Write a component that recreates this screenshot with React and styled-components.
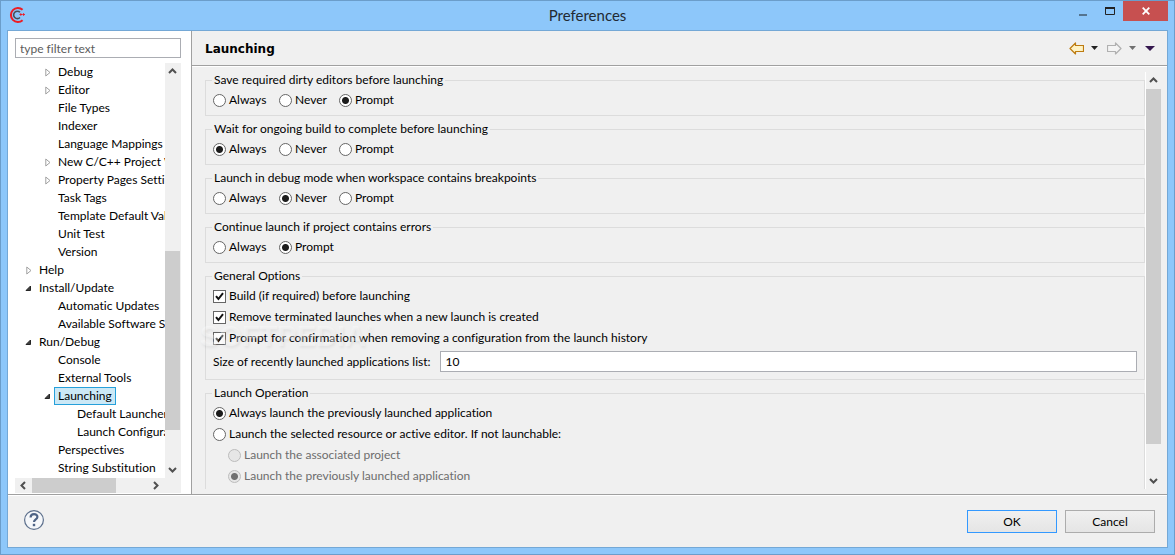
import React from 'react';
import styled, { createGlobalStyle, css } from 'styled-components';

const Global = createGlobalStyle`
  * { box-sizing: border-box; }
  html, body, #root { height: 100%; }
  body {
    margin: 0;
    color: #000;
    font: 12px/16px Lato, "Open Sans", sans-serif;
    font-variant-ligatures: none;
  }
  button, input { font: inherit; color: inherit; }
`;

/* ---------- window frame ---------- */

const Window = styled.div`
  display: flex;
  flex-direction: column;
  height: 100%;
  padding: 0 6px 6px;
  background: #8dc7fa;
  border: 1px solid #6b9dca;
`;

const TitleBar = styled.header`
  display: grid;
  grid-template-columns: 1fr auto 1fr;
  flex: none;
  height: 29px;
`;

const AppMark = styled.div`
  padding: 5px 0 0 2px;
  svg { display: block; }
`;

const WindowTitle = styled.h1`
  margin: 0;
  font-size: 15px;
  font-weight: 400;
  line-height: 29px;
  color: #222a33;
`;

const Controls = styled.div`
  display: flex;
  justify-content: flex-end;
  align-items: flex-start;
`;

const ControlButton = styled.button`
  display: grid;
  place-items: center;
  width: ${p => (p.$close ? 45 : 27)}px;
  height: 20px;
  padding: 0;
  border: 0;
  color: #fff;
  background: ${p => (p.$close ? '#c75050' : 'transparent')};
`;

const Dialog = styled.main`
  display: flex;
  flex-direction: column;
  flex: 1;
  min-height: 0;
  background: #f0f0f0;
  border: 1px solid #74a8d6;
`;

const Panes = styled.div`
  display: flex;
  flex: 1;
  min-height: 0;
  border-bottom: 1px solid #a0a0a0;
`;

/* ---------- navigation ---------- */

const Sidebar = styled.nav`
  display: flex;
  flex-direction: column;
  flex: none;
  width: 184px;
  padding: 7px 10px 1px 7px;
  background: #fff;
  border-right: 1px solid #a0a0a0;
`;

const Filter = styled.input`
  width: 100%;
  height: 20px;
  margin-bottom: 5px;
  padding: 0 4px;
  background: #fff;
  border: 1px solid #abadb3;
  border-radius: 0;
  outline: 0;
  &::placeholder { color: #5c5c5c; opacity: 1; }
`;

const TreeArea = styled.div`
  display: flex;
  flex: 1;
  min-height: 0;
`;

const Tree = styled.ul`
  flex: 1;
  min-width: 0;
  margin: 0;
  padding: 0;
  overflow: hidden;
  list-style: none;
`;

const TreeRow = styled.li`
  display: flex;
  align-items: center;
  height: 18px;
  padding-left: ${p => p.$level * 19 - 11}px;
  white-space: nowrap;
`;

const Twisty = styled.span`
  flex: none;
  display: grid;
  place-items: center;
  width: 11px;
  height: 16px;
  margin-right: 1px;
  padding-top: 1px;
`;

const TreeLink = styled.a`
  padding: 0 3px;
  line-height: 16px;
  color: #000;
  text-decoration: none;
  border: 1px solid transparent;
  ${p => p.$selected && css`
    background: #cbe8f6;
    border-color: #26a0da;
  `}
`;

/* ---------- scroll bars ---------- */

const ScrollBar = styled.div`
  display: flex;
  flex: none;
  flex-direction: ${p => (p.$horizontal ? 'row' : 'column')};
  ${p => (p.$horizontal ? 'height: 15px; padding-right: 17px;' : 'width: 16px;')}
  background: #f0f0f0;
`;

const ScrollButton = styled.button`
  display: grid;
  place-items: center;
  flex: none;
  width: ${p => (p.$horizontal ? 17 : 15)}px;
  height: ${p => (p.$horizontal ? 15 : 17)}px;
  padding: 0;
  border: 0;
  background: transparent;
`;

const Track = styled.div`
  display: flex;
  flex: 1;
  flex-direction: inherit;
`;

const Gap = styled.div`
  flex: ${p => p.$size} 0 0;
`;

const Thumb = styled.div`
  flex: ${p => p.$size} 0 0;
  min-width: 15px;
  max-width: ${p => (p.$vertical ? '15px' : 'none')};
  background: #cdcdcd;
`;

/* ---------- page ---------- */

const Page = styled.section`
  display: flex;
  flex-direction: column;
  flex: 1;
  min-width: 0;
`;

const PageHeader = styled.header`
  display: flex;
  align-items: center;
  justify-content: space-between;
  flex: none;
  height: 35px;
  padding: 0 12px 0 13px;
  border-bottom: 1px solid #a0a0a0;
  box-shadow: 0 1px 0 #fff;
`;

const PageTitle = styled.h2`
  margin: 0;
  padding-top: 2px;
  font: bold 12px/16px "DejaVu Sans", sans-serif;
`;

const Tools = styled.div`
  display: flex;
  align-items: center;
  gap: 9px;
`;

const ToolPair = styled.div`
  display: flex;
  align-items: center;
  gap: 7px;
`;

const ToolButton = styled.button`
  display: grid;
  place-items: center;
  height: 16px;
  padding: 0;
  border: 0;
  background: transparent;
  svg { display: block; }
`;

const PageBody = styled.div`
  position: relative;
  display: flex;
  flex: 1;
  min-height: 0;
  padding: 6px 5px 5px 13px;
`;

const Groups = styled.form`
  display: flex;
  flex-direction: column;
  gap: 5px;
  flex: 1;
  min-width: 0;
  overflow: hidden;
  border-right: 1px solid #fff;
`;

const Group = styled.fieldset`
  flex: none;
  display: flex;
  flex-direction: column;
  gap: 5px;
  margin: 0;
  padding: 4px 7px 7px;
  border: 1px solid #dcdcdc;
  legend {
    padding: 0 2px;
    margin-left: -1px;
    line-height: 16px;
  }
`;

const RadioRow = styled.div`
  display: grid;
  grid-template-columns: 66px 60px auto;
  justify-content: start;
  grid-auto-flow: column;
`;

const Option = styled.label`
  display: flex;
  align-items: center;
  gap: 3px;
  height: 16px;
  padding-left: ${p => (p.$nested ? 15 : 0)}px;
  color: ${p => (p.$disabled ? '#6d6d6d' : '#000')};
  white-space: nowrap;
`;

const Radio = styled.input.attrs({ type: 'radio' })`
  appearance: none;
  width: 13px;
  height: 13px;
  margin: 0;
  background: #fff;
  border: 1px solid #666;
  border-radius: 50%;
  &:checked { background: radial-gradient(circle, #1c1c1c 3px, #fff 4px); }
  &:disabled { background: #e6e6e6; border-color: #bcbcbc; }
  &:disabled:checked { background: radial-gradient(circle, #707070 3px, #e6e6e6 4px); }
`;

const CheckMark = styled.span`
  display: grid;
  width: 13px;
  height: 13px;
  > * { grid-area: 1 / 1; }
  svg { pointer-events: none; }
`;

const Box = styled.input.attrs({ type: 'checkbox' })`
  appearance: none;
  width: 13px;
  height: 13px;
  margin: 0;
  background: #fff;
  border: 1px solid #666;
  & + svg { visibility: hidden; }
  &:checked + svg { visibility: visible; }
`;

const Field = styled.label`
  display: flex;
  align-items: center;
  gap: 9px;
  height: 21px;
`;

const FieldInput = styled.input`
  flex: 1;
  min-width: 0;
  height: 21px;
  padding: 0 5px;
  background: #fff;
  border: 1px solid #abadb3;
  outline: 0;
`;

const Watermark = styled.div`
  position: absolute;
  left: 8px;
  top: 254px;
  font: bold 29px/32px "Liberation Sans", sans-serif;
  color: rgba(255, 255, 255, 0.36);
  text-shadow: 1px 2px 3px rgba(0, 0, 0, 0.06);
  pointer-events: none;
  sup {
    font-size: 9px;
    line-height: 8px;
    vertical-align: 14px;
  }
`;

/* ---------- footer ---------- */

const Footer = styled.footer`
  display: flex;
  align-items: flex-start;
  justify-content: space-between;
  flex: none;
  height: 52px;
  padding: 14px 12px 0 16px;
  border-top: 1px solid #fff;
`;

const HelpButton = styled.button`
  width: 20px;
  height: 20px;
  padding: 0;
  border: 0;
  background: transparent;
  svg { display: block; }
`;

const Actions = styled.div`
  display: flex;
  gap: 8px;
`;

const PushButton = styled.button`
  width: 90px;
  height: 23px;
  padding: 0;
  background: linear-gradient(#f0f0f0, #e5e5e5);
  border: 1px solid ${p => (p.$primary ? '#3399ff' : '#acacac')};
`;

/* ---------- drawings ---------- */

const AppIcon = () => (
  <svg width="18" height="18" viewBox="0 0 18 18" fill="none">
    <path d="M13.6 3.8A7 7 0 1 0 13.6 14.2" stroke="#ec1c24" strokeWidth="2" />
    <path d="M11 6.3A3.7 3.7 0 1 0 11 11.5" stroke="#4a4f57" strokeWidth="1.6" />
    <path d="M10.5 8.5h2.6M11.8 7.2v2.6M13.3 8.5h2.6M14.6 7.2v2.6" stroke="#ec1c24" />
  </svg>
);

const Expanded = () => (
  <svg width="7" height="7" viewBox="0 0 7 7"><path d="M5.5 1v4.5H1z" fill="#404040" stroke="#262626" /></svg>
);

const Collapsed = () => (
  <svg width="6" height="9" viewBox="0 0 6 9"><path d="M.8 1v7L5 4.5z" fill="#fff" stroke="#a0a0a0" /></svg>
);

const chevrons = {
  up: 'M1 6 4.5 2.5 8 6',
  down: 'M1 3 4.5 6.5 8 3',
  left: 'M6 1 2.5 4.5 6 8',
  right: 'M3 1 6.5 4.5 3 8',
};
const Chevron = ({ to }) => (
  <svg width="9" height="9" viewBox="0 0 9 9" fill="none">
    <path d={chevrons[to]} stroke="#505050" strokeWidth="2" />
  </svg>
);

const Arrow = ({ forward }) => (
  <svg width="15" height="13" viewBox="0 0 15 13" fill="none">
    <path
      d={forward ? 'M14 6.5 8.5 1v2.5h-8v6h8V12z' : 'M1 6.5 6.5 1v2.5h8v6h-8V12z'}
      fill={forward ? '#f4f4f4' : '#fff3c4'}
      stroke={forward ? '#b0b0b0' : '#bd7b10'}
      strokeWidth="1.2"
      strokeLinejoin="round"
    />
  </svg>
);

const Caret = ({ color, wide }) => (
  <svg width={wide ? 10 : 7} height={wide ? 5 : 4} viewBox="0 0 8 4" preserveAspectRatio="none">
    <path d="M0 0h8L4 4z" fill={color} />
  </svg>
);

const HelpIcon = () => (
  <svg width="20" height="20" viewBox="1 1 20 20" fill="none">
    <circle cx="11" cy="11" r="9.4" fill="#f5f7fa" stroke="#5c6f8c" strokeWidth="1.2" />
    <path d="M7.6 8.4C7.6 4 14.6 4.2 14.4 8c-.1 2.4-3.4 2.4-3.4 5" stroke="#4e6385" strokeWidth="2.2" />
    <path d="M9.8 14.8h2.4v2.4H9.8z" fill="#4e6385" />
  </svg>
);

const Tick = () => (
  <svg width="13" height="13" viewBox="0 0 13 13" fill="none">
    <path d="M3 6.2 5.4 9 10 3.2" stroke="#111" strokeWidth="2" />
  </svg>
);

/* ---------- data ---------- */

const tree = [
  [2, 'Debug', 'closed'], [2, 'Editor', 'closed'], [2, 'File Types'], [2, 'Indexer'],
  [2, 'Language Mappings'], [2, 'New C/C++ Project Wizard', 'closed'],
  [2, 'Property Pages Settings', 'closed'], [2, 'Task Tags'], [2, 'Template Default Values'],
  [2, 'Unit Test'], [2, 'Version'], [1, 'Help', 'closed'], [1, 'Install/Update', 'open'],
  [2, 'Automatic Updates'], [2, 'Available Software Sites'], [1, 'Run/Debug', 'open'],
  [2, 'Console'], [2, 'External Tools'], [2, 'Launching', 'open'], [3, 'Default Launchers'],
  [3, 'Launch Configurations'], [2, 'Perspectives'], [2, 'String Substitution'],
];

const questions = [
  ['Save required dirty editors before launching', ['Always', 'Never', 'Prompt'], 'Prompt'],
  ['Wait for ongoing build to complete before launching', ['Always', 'Never', 'Prompt'], 'Always'],
  ['Launch in debug mode when workspace contains breakpoints', ['Always', 'Never', 'Prompt'], 'Never'],
  ['Continue launch if project contains errors', ['Always', 'Prompt'], 'Prompt'],
];

const generalOptions = [
  'Build (if required) before launching',
  'Remove terminated launches when a new launch is created',
  'Prompt for confirmation when removing a configuration from the launch history',
];

function Scroller({ horizontal, before, thumb, after }) {
  return (
    <ScrollBar $horizontal={horizontal}>
      <ScrollButton type="button" $horizontal={horizontal} aria-label={horizontal ? 'Scroll left' : 'Scroll up'}>
        <Chevron to={horizontal ? 'left' : 'up'} />
      </ScrollButton>
      <Track>
        <Gap $size={before} />
        <Thumb $size={thumb} $vertical={!horizontal} />
        <Gap $size={after} />
      </Track>
      <ScrollButton type="button" $horizontal={horizontal} aria-label={horizontal ? 'Scroll right' : 'Scroll down'}>
        <Chevron to={horizontal ? 'right' : 'down'} />
      </ScrollButton>
    </ScrollBar>
  );
}

export default function App() {
  return (
    <>
      <Global />
      <Window>
        <TitleBar>
          <AppMark><AppIcon /></AppMark>
          <WindowTitle>Preferences</WindowTitle>
          <Controls>
            <ControlButton type="button" aria-label="Minimize">
              <svg width="8" height="10" viewBox="0 0 8 10"><path d="M0 8h8v2H0z" fill="#55748f" /></svg>
            </ControlButton>
            <ControlButton type="button" aria-label="Maximize">
              <svg width="10" height="8" viewBox="0 0 10 8" fill="none">
                <path d="M.5 1v6.5h9V1" stroke="#222" /><path d="M0 0h10v2H0z" fill="#222" />
              </svg>
            </ControlButton>
            <ControlButton type="button" $close aria-label="Close">
              <svg width="8" height="8" viewBox="0 0 8 8"><path d="M.7.7l6.6 6.6M7.3.7.7 7.3" stroke="#fff" strokeWidth="1.8" /></svg>
            </ControlButton>
          </Controls>
        </TitleBar>
        <Dialog>
          <Panes>
            <Sidebar>
              <Filter type="text" placeholder="type filter text" aria-label="Filter" />
              <TreeArea>
                <Tree>
                  {tree.map(([level, name, state]) => (
                    <TreeRow key={name} $level={level}>
                      <Twisty>
                        {state === 'open' && <Expanded />}
                        {state === 'closed' && <Collapsed />}
                      </Twisty>
                      <TreeLink href="#" $selected={name === 'Launching'}>{name}</TreeLink>
                    </TreeRow>
                  ))}
                </Tree>
                <Scroller before={171} thumb={178} after={31} />
              </TreeArea>
              <Scroller horizontal before={0} thumb={84} after={31} />
            </Sidebar>
            <Page>
              <PageHeader>
                <PageTitle>Launching</PageTitle>
                <Tools>
                  <ToolPair>
                    <ToolButton type="button" aria-label="Back"><Arrow /></ToolButton>
                    <ToolButton type="button" aria-label="Back history"><Caret color="#222" /></ToolButton>
                  </ToolPair>
                  <ToolPair>
                    <ToolButton type="button" aria-label="Forward"><Arrow forward /></ToolButton>
                    <ToolButton type="button" aria-label="Forward history"><Caret color="#707070" /></ToolButton>
                  </ToolPair>
                  <ToolButton type="button" aria-label="Menu"><Caret color="#35184f" wide /></ToolButton>
                </Tools>
              </PageHeader>
              <PageBody>
                <Groups>
                  {questions.map(([title, answers, chosen]) => (
                    <Group key={title}>
                      <legend>{title}</legend>
                      <RadioRow>
                        {answers.map(answer => (
                          <Option key={answer}>
                            <Radio name={title} defaultChecked={answer === chosen} />{answer}
                          </Option>
                        ))}
                      </RadioRow>
                    </Group>
                  ))}
                  <Group>
                    <legend>General Options</legend>
                    {generalOptions.map(text => (
                      <Option key={text}>
                        <CheckMark><Box defaultChecked /><Tick /></CheckMark>{text}
                      </Option>
                    ))}
                    <Field>
                      Size of recently launched applications list:
                      <FieldInput type="text" defaultValue="10" />
                    </Field>
                  </Group>
                  <Group>
                    <legend>Launch Operation</legend>
                    <Option><Radio name="operation" defaultChecked />Always launch the previously launched application</Option>
                    <Option><Radio name="operation" />Launch the selected resource or active editor. If not launchable:</Option>
                    <Option $nested $disabled><Radio name="fallback" disabled />Launch the associated project</Option>
                    <Option $nested $disabled><Radio name="fallback" disabled defaultChecked />Launch the previously launched application</Option>
                  </Group>
                </Groups>
                <Scroller before={0} thumb={356} after={28} />
                <Watermark aria-hidden="true">SOFTPEDIA<sup>®</sup></Watermark>
              </PageBody>
            </Page>
          </Panes>
          <Footer>
            <HelpButton type="button" aria-label="Help"><HelpIcon /></HelpButton>
            <Actions>
              <PushButton type="button" $primary>OK</PushButton>
              <PushButton type="button">Cancel</PushButton>
            </Actions>
          </Footer>
        </Dialog>
      </Window>
    </>
  );
}
